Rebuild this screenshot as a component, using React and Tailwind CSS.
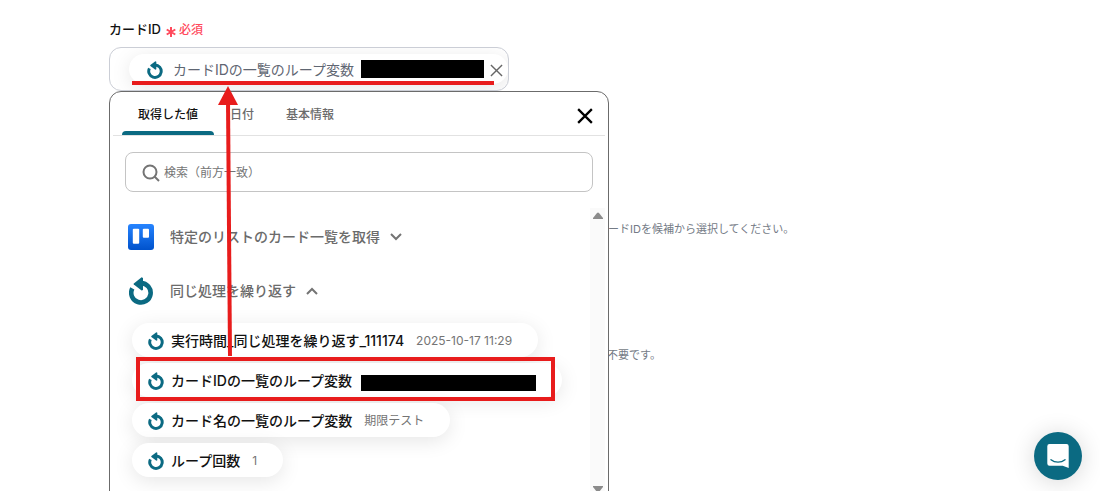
import { useState } from 'react';

const LoopIcon = ({ className }) => (
    <svg viewBox="0 0 24 28" className={className} aria-hidden="true">
        <path d="M3.3 11.4A9.7 9.7 0 1 0 12 6.1" fill="none" stroke="#0b6a82" strokeWidth="4.6" />
        <path d="M4.8 6.4Q4.2 7 4.8 7.6L12.6 13.6 14 13V1L12.6.3z" fill="#0b6a82" />
    </svg>
);

const TrelloIcon = () => (
    <svg viewBox="0 0 26 26" className="size-[26px]" aria-hidden="true">
        <defs>
            <linearGradient id="trello" x1="0" y1="0" x2="0" y2="1">
                <stop offset="0" stopColor="#2684ff" />
                <stop offset="1" stopColor="#0052cc" />
            </linearGradient>
        </defs>
        <rect width="26" height="26" rx="3" fill="url(#trello)" />
        <rect x="4.8" y="4.8" width="6.4" height="15" rx="1" fill="#fff" />
        <rect x="14.8" y="4.8" width="6.2" height="9" rx="1" fill="#fff" />
    </svg>
);

const Cross = ({ className }) => (
    <svg viewBox="0 0 14 14" className={className} fill="none" stroke="currentColor" aria-hidden="true">
        <path d="M1 1l12 12M13 1L1 13" />
    </svg>
);

const Chevron = ({ up }) => (
    <svg viewBox="0 0 12 8" className="w-3 h-2" fill="none" stroke="#747474" strokeWidth="2" aria-hidden="true">
        <path d={up ? 'M1 7l5-5 5 5' : 'M1 1l5 5 5-5'} />
    </svg>
);

const tabs = ['取得した値', '日付', '基本情報'];

const variables = [
    { name: '実行時間_同じ処理を繰り返す_111174', value: '2025-10-17 11:29' },
    { name: 'カードIDの一覧のループ変数', masked: true },
    { name: 'カード名の一覧のループ変数', value: '期限テスト' },
    { name: 'ループ回数', value: '1' },
];

const VariableChip = ({ name, value, masked }) => (
    <button
        type="button"
        className="flex h-[34px] items-center rounded-full bg-white pl-4 pr-[26px] pt-[2px] shadow-[0_4px_20px_rgba(0,0,0,0.10)]"
    >
        <LoopIcon className="mr-[7px] h-[18px] w-4" />
        <span className="text-sm font-medium text-[#111]">{name}</span>
        {masked ? (
            <span className="ml-[9px] mt-1 h-4 w-[175px] bg-black" />
        ) : (
            <span className="ml-3 text-xs text-[#747474]">{value}</span>
        )}
    </button>
);

const StepHeader = ({ icon, title, open }) => (
    <button type="button" className="flex h-[54px] items-center text-sm font-medium text-[#6b6b6b]">
        <span className="mr-4 flex w-[26px] justify-center">{icon}</span>
        <span className="mr-[10px]">{title}</span>
        <Chevron up={open} />
    </button>
);

const ValuePicker = () => {
    const [active, setActive] = useState(0);

    return (
        <div className="absolute left-0 top-full z-10 w-[500px] rounded-t-xl border border-[#6b6b6b] bg-white">
            <div className="mx-[3px] flex h-11 items-stretch border-b border-[#e2e2e2] pl-[9px]">
                {tabs.map((tab, i) => (
                    <button
                        key={tab}
                        type="button"
                        onClick={() => setActive(i)}
                        className={
                            i === active
                                ? 'relative px-4 pt-[2px] text-xs font-medium text-[#111] after:absolute after:inset-x-0 after:bottom-0 after:h-1 after:rounded-t-sm after:bg-[#0b6a82]'
                                : 'px-4 pt-[2px] text-xs font-medium text-[#6b6b6b]'
                        }
                    >
                        {tab}
                    </button>
                ))}
                <button type="button" aria-label="閉じる" className="ml-auto mr-3 pt-1">
                    <Cross className="size-4 stroke-2 text-black" />
                </button>
            </div>

            <label className="mx-[15px] mt-4 flex h-10 items-center rounded-lg border border-[#c4c4c4] pl-4 pt-[2px]">
                <svg viewBox="0 0 18 18" className="mr-1 size-[18px]" fill="none" stroke="#747474" strokeWidth="2" aria-hidden="true">
                    <circle cx="8" cy="8" r="6.5" />
                    <path d="M12.5 12.5l4.5 4.5" />
                </svg>
                <input
                    type="text"
                    aria-label="検索"
                    placeholder="検索（前方一致）"
                    className="min-w-0 flex-1 text-xs outline-none placeholder:text-[#747474]"
                />
            </label>

            <div className="mr-[3px] mt-4 flex">
                <div className="flex-1 pl-[18px] pt-[2px]">
                    <StepHeader icon={<TrelloIcon />} title="特定のリストのカード一覧を取得" />
                    <StepHeader icon={<LoopIcon className="h-7 w-6" />} title="同じ処理を繰り返す" open />
                    <div className="mt-[5px] flex flex-col items-start gap-[6px] pb-4 pl-1">
                        {variables.map((v) => (
                            <VariableChip key={v.name} {...v} />
                        ))}
                    </div>
                </div>
                <div className="flex w-[15px] flex-col items-center justify-between bg-[#fafafa] pb-0 pt-1">
                    <svg viewBox="0 0 10 8" className="h-2 w-[10px]" fill="#8b8b8b" aria-hidden="true">
                        <path d="M4 1q1-1 2 0l4 5v1H0V6z" />
                    </svg>
                    <svg viewBox="0 0 10 8" className="h-2 w-[10px]" fill="#8b8b8b" aria-hidden="true">
                        <path d="M4 7q1 1 2 0l4-5V1H0v1z" />
                    </svg>
                </div>
            </div>
        </div>
    );
};

const CardIdField = () => (
    <div className="relative w-[500px]">
        <div className="flex h-5 items-center text-[13px]">
            <span className="font-medium text-[#111]">カードID</span>
            <svg viewBox="0 0 10 10" className="ml-[5px] mr-[3px] mt-1 size-[10px]" stroke="#ff4a5c" strokeWidth="2" aria-hidden="true">
                <path d="M5 0v10M.7 2.5l8.6 5M9.3 2.5l-8.6 5" />
            </svg>
            <span className="text-xs font-medium text-[#ff4a5c]">必須</span>
        </div>
        <div className="mt-[7px] flex h-11 w-[400px] items-center overflow-hidden rounded-xl border border-[#cbced6] pl-[19px]">
            <div className="flex h-[30px] flex-1 items-center rounded-full bg-white pl-[18px] pr-[5px] pt-[2px] shadow-[0_4px_20px_rgba(0,0,0,0.10)]">
                <LoopIcon className="mr-[10px] h-[18px] w-4" />
                <span className="text-sm text-[#5f6672]">カードIDの一覧のループ変数</span>
                <span className="mb-[3px] ml-[7px] h-[18px] w-[123px] bg-black" />
                <button type="button" aria-label="削除" className="ml-auto">
                    <Cross className="size-[13px] stroke-[1.5] text-[#666]" />
                </button>
            </div>
        </div>
        <ValuePicker />
    </div>
);

const ChatButton = () => (
    <button
        type="button"
        aria-label="チャット"
        className="fixed bottom-[11px] right-[18px] flex size-12 items-center justify-center rounded-full bg-[#0b6a82] shadow-[0_2px_24px_rgba(0,0,0,0.16)]"
    >
        <svg viewBox="0 0 22 24" className="h-6 w-[22px]" aria-hidden="true">
            <path d="M2.5 0h17A2.2 2.2 0 0 1 21.7 2.2V24l-6-2.2H2.5A2.2 2.2 0 0 1 .3 19.6V2.2A2.2 2.2 0 0 1 2.5 0z" fill="#fff" />
            <path d="M4 15.7c4 3.2 10 3.2 14 0" fill="none" stroke="#0b6a82" strokeWidth="1.4" strokeLinecap="round" />
        </svg>
    </button>
);

// Red markers drawn over the form: underline, arrow and frame
const Annotation = () => (
    <svg className="pointer-events-none absolute left-0 top-0 z-20 h-full w-full" fill="none" stroke="#e81c1c" strokeWidth="4" aria-hidden="true">
        <path d="M132 83h362" />
        <path d="M230 356L228 100" />
        <path d="M228 86l10 19h-20z" fill="#e81c1c" stroke="none" />
        <rect x="138" y="359" width="415" height="40" />
    </svg>
);

const App = () => {
    return (
        <div className="relative h-screen overflow-hidden bg-white font-['Inter','Noto_Sans_CJK_JP',sans-serif]">
            <main className="pl-[109px] pt-5">
                <CardIdField />
                <p className="mt-32 pl-[488px] text-[11px] leading-5 text-[#747b86]">カードIDを候補から選択してください。</p>
                <p className="mt-[106px] pl-[498px] text-[11px] leading-5 text-[#747b86]">不要です。</p>
            </main>
            <Annotation />
            <ChatButton />
        </div>
    );
};

export default App;
